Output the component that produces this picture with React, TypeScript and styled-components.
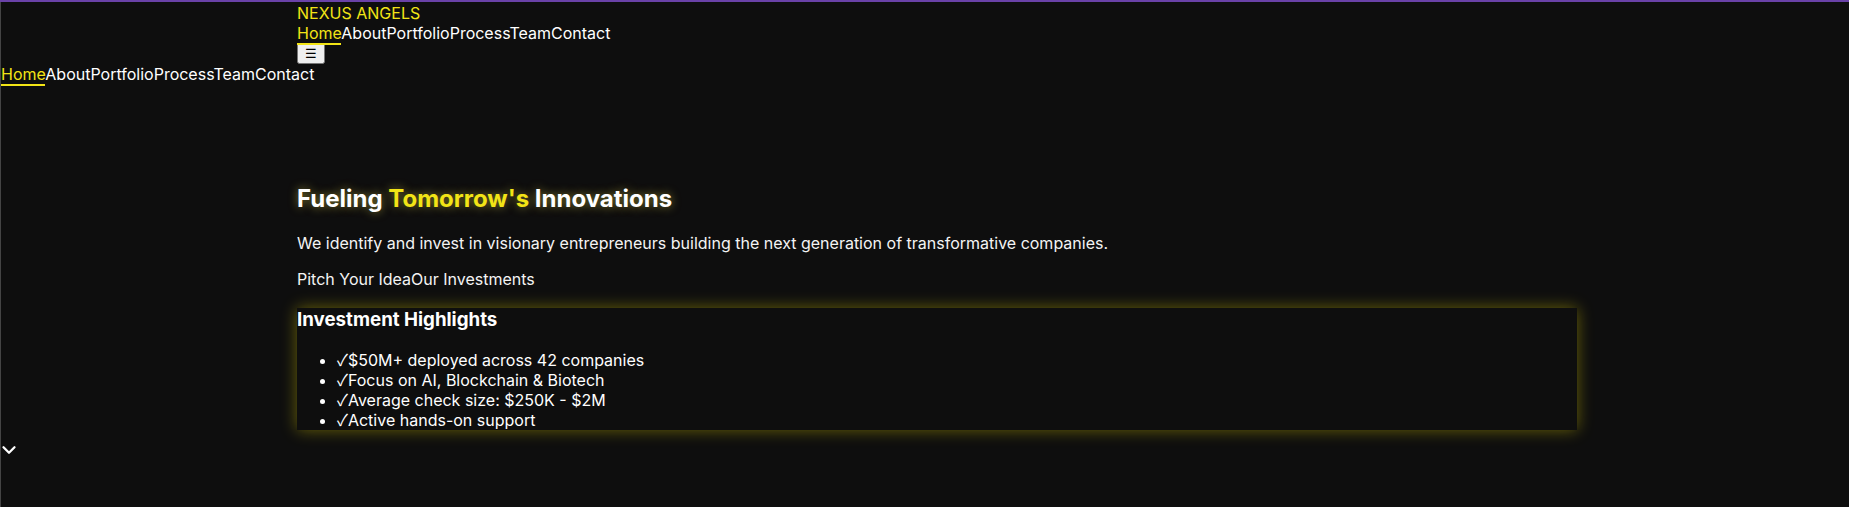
import React from 'react';
import styled, { createGlobalStyle } from 'styled-components';
import { ChevronDown } from 'lucide-react';

const NEON = '#f2e416';

const GlobalStyle = createGlobalStyle`
  html, body {
    margin: 0;
    background: #0e0e0e;
  }
  body {
    font-family: Inter, sans-serif;
    font-size: 16px;
    color: #ffffff;
  }
`;

const Page = styled.div`
  position: relative;
  min-height: 100vh;
  border-top: 2px solid #6a42a8;
  box-sizing: border-box;
`;

// thin grey line along the left edge (off-canvas panel peeking in)
const EdgeLine = styled.div`
  position: absolute;
  top: 0;
  bottom: 0;
  left: 0;
  width: 1px;
  background: #444444;
`;

const Shell = styled.div`
  padding-left: 25px;
`;

const Container = styled.div`
  max-width: 1280px;
  margin: 0 auto;
`;

const Header = styled.header`
  padding-top: 1px;
`;

const Logo = styled.div`
  color: ${NEON};
`;

const NavRow = styled.nav<{ $inset?: boolean }>`
  padding-left: ${(p) => (p.$inset ? '1px' : '0')};
`;

const NavLink = styled.a<{ $active?: boolean }>`
  color: ${(p) => (p.$active ? NEON : '#ffffff')};
  text-decoration: none;
  border-bottom: ${(p) => (p.$active ? `2px solid ${NEON}` : 'none')};
  cursor: pointer;
`;

const MenuButton = styled.button`
  display: block;
`;

const Hero = styled.section`
  padding-top: 100px;
`;

const Title = styled.h1`
  margin: 0 0 20px;
  font-size: 24px;
  font-weight: 700;
  color: #ffffff;
  text-shadow: 0 0 10px rgba(255, 240, 80, 0.5);
`;

const Accent = styled.span`
  color: ${NEON};
`;

const Lead = styled.p`
  margin: 0 0 16px;
  color: #f4f4f4;
`;

const Actions = styled.div`
  margin-bottom: 19px;
`;

const ActionLink = styled.a`
  color: #f4f4f4;
  text-decoration: none;
  cursor: pointer;
`;

const Highlights = styled.div`
  box-shadow: 0 0 15px rgba(255, 236, 0, 0.38);
  background: #0e0e0e;
`;

const HighlightsTitle = styled.h3`
  margin: 0 0 18.72px;
  font-size: 18.72px;
  font-weight: 700;
`;

const HighlightList = styled.ul`
  margin: 0;
  padding-left: 40px;
`;

const HighlightItem = styled.li`
  line-height: 20px;
`;

const Tick = styled.span`
  font-family: "Noto Sans CJK JP", sans-serif;
  line-height: 1;
`;

const ScrollHint = styled.div`
  position: absolute;
  left: -2px;
  top: 437px;
  color: #ffffff;
  line-height: 0;
`;

const links = ['Home', 'About', 'Portfolio', 'Process', 'Team', 'Contact'];

const highlights = [
  '$50M+ deployed across 42 companies',
  'Focus on AI, Blockchain & Biotech',
  'Average check size: $250K - $2M',
  'Active hands-on support',
];

const Links: React.FC = () => (
  <>
    {links.map((l, i) => (
      <NavLink key={l} $active={i === 0}>
        {l}
      </NavLink>
    ))}
  </>
);

export default function App() {
  return (
    <Page>
      <GlobalStyle />
      <EdgeLine />
      <Shell>
        <Container>
          <Header>
            <Logo>NEXUS ANGELS</Logo>
            <NavRow>
              <Links />
            </NavRow>
            <MenuButton aria-label="Menu">☰</MenuButton>
          </Header>
        </Container>
      </Shell>
      <NavRow $inset>
        <Links />
      </NavRow>
      <Shell>
        <Container>
          <Hero>
            <Title>
              Fueling <Accent>Tomorrow's</Accent> Innovations
            </Title>
            <Lead>
              We identify and invest in visionary entrepreneurs building the
              next generation of transformative companies.
            </Lead>
            <Actions>
              <ActionLink>Pitch Your Idea</ActionLink>
              <ActionLink>Our Investments</ActionLink>
            </Actions>
            <Highlights>
              <HighlightsTitle>Investment Highlights</HighlightsTitle>
              <HighlightList>
                {highlights.map((h) => (
                  <HighlightItem key={h}>
                    <Tick>✓</Tick>
                    {h}
                  </HighlightItem>
                ))}
              </HighlightList>
            </Highlights>
          </Hero>
        </Container>
      </Shell>
      <ScrollHint>
        <ChevronDown size={22} strokeWidth={2.5} />
      </ScrollHint>
    </Page>
  );
}
